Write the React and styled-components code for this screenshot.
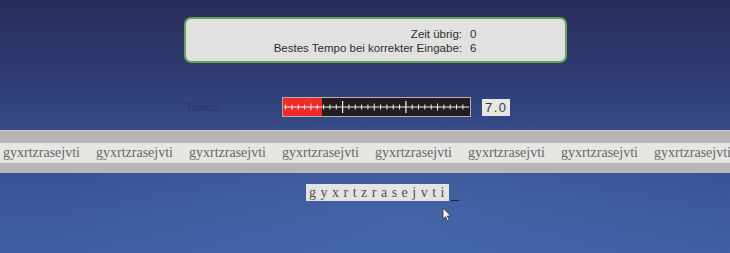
import React from 'react';
import styled, { createGlobalStyle } from 'styled-components';

const GlobalStyle = createGlobalStyle`
  html, body {
    margin: 0;
    padding: 0;
    overflow: hidden;
  }
  body {
    font-family: "Liberation Sans", Arial, sans-serif;
  }
`;

const WORD = 'gyxrtzrasejvti';
const TEMPO = 7.0;
const TEMPO_MAX = 30;

function App() {
  const repeats = Array.from({ length: 8 });
  return (
    <Screen>
      <GlobalStyle />
      <InfoBox>
        <InfoGrid>
          <InfoLabel>Zeit übrig:</InfoLabel>
          <InfoValue>0</InfoValue>
          <InfoLabel>Bestes Tempo bei korrekter Eingabe:</InfoLabel>
          <InfoValue>6</InfoValue>
        </InfoGrid>
      </InfoBox>

      <TempoRow>
        <TempoLabel>Tempo:</TempoLabel>
        <Meter>
          <MeterFill style={{ width: `${(TEMPO / TEMPO_MAX) * 100 * 0.9}%` }} />
          <Scale />
        </Meter>
        <ValueBox>{TEMPO.toFixed(1)}</ValueBox>
      </TempoRow>

      <Band>
        <Strip>
          {repeats.map((_, i) => (
            <Word key={i}>{WORD}</Word>
          ))}
        </Strip>
      </Band>

      <InputRow>
        <Typed>{WORD}</Typed>
        <Caret />
        <Pointer />
      </InputRow>
    </Screen>
  );
}

function Scale() {
  const ticks = [];
  const step = 63.3 / 10;
  for (let i = 0; i <= 30; i++) {
    const x = -3.7 + i * step;
    if (x < 1 || x > 186) continue;
    const major = i % 10 === 0;
    const mid = i % 5 === 0;
    const h = major ? 6 : mid ? 3.5 : 2.5;
    ticks.push(
      <line key={i} x1={x} x2={x} y1={9 - h} y2={9 + h} stroke="#f2f2f2" strokeWidth={major ? 1.2 : 1} />
    );
  }
  return (
    <ScaleSvg viewBox="0 0 187 18" width="187" height="18">
      <line x1="1" x2="186" y1="9" y2="9" stroke="#f2f2f2" strokeWidth="1" />
      {ticks}
    </ScaleSvg>
  );
}

function Pointer() {
  return (
    <PointerSvg width="10" height="15" viewBox="0 0 10 15">
      <path d="M1 1 L1 12 L3.5 9.6 L5.6 14 L7.3 13.2 L5.3 9 L8.6 9 Z" fill="#f4f4f4" stroke="#333" strokeWidth="0.8" />
    </PointerSvg>
  );
}

export default App;

const Screen = styled.div`
  position: relative;
  width: 730px;
  height: 253px;
  overflow: hidden;
  background:
    radial-gradient(ellipse 70% 60% at 55% 85%, rgba(80, 120, 190, 0.35), rgba(0, 0, 0, 0) 70%),
    linear-gradient(180deg, #282e5a 0%, #2f3b71 30%, #37508e 60%, #3f5fa4 100%);
  padding-top: 17px;
  box-sizing: border-box;
`;

const InfoBox = styled.div`
  margin-left: 184px;
  width: 383px;
  height: 46px;
  box-sizing: border-box;
  background: #e1e1df;
  border: 2px solid #67a35a;
  border-radius: 7px;
  display: flex;
  align-items: center;
  padding-top: 3px;
`;

const InfoGrid = styled.div`
  display: grid;
  grid-template-columns: 276px auto;
  column-gap: 8px;
  row-gap: 1px;
  font-size: 11.5px;
  line-height: 13px;
  color: #2e2e2e;
`;

const InfoLabel = styled.span`
  text-align: right;
`;

const InfoValue = styled.span``;

const TempoRow = styled.div`
  margin-top: 34px;
  height: 20px;
  display: flex;
  align-items: center;
  padding-left: 186px;
`;

const TempoLabel = styled.span`
  width: 96px;
  font-size: 11px;
  color: #2a3766;
`;

const Meter = styled.div`
  position: relative;
  width: 189px;
  height: 20px;
  box-sizing: border-box;
  border: 1.5px solid #b4b0b2;
  background: #241d20;
  overflow: hidden;
`;

const MeterFill = styled.div`
  position: absolute;
  left: 0;
  top: 0;
  bottom: 0;
  background: #ee2a2a;
`;

const ScaleSvg = styled.svg`
  position: absolute;
  left: 0;
  top: 0;
  display: block;
`;

const ValueBox = styled.div`
  margin-left: 11px;
  width: 28px;
  height: 17px;
  background: #e6e6e4;
  color: #3a3a3a;
  font-size: 13px;
  letter-spacing: 1.5px;
  display: flex;
  align-items: center;
  padding-left: 3px;
  box-sizing: border-box;
`;

const Band = styled.div`
  margin-top: 13px;
  height: 43px;
  background: #b9b4b6;
  border-top: 1px solid #cfcdd0;
  box-sizing: border-box;
  padding-top: 12px;
`;

const Strip = styled.div`
  height: 20px;
  background: #e6e6e3;
  display: flex;
  align-items: center;
  gap: 15px;
  padding-left: 3px;
  white-space: nowrap;
  overflow: hidden;
`;

const Word = styled.span`
  font-family: "Liberation Serif", "Times New Roman", serif;
  font-size: 14px;
  color: #6a6769;
  flex: none;
  width: 78px;
`;

const InputRow = styled.div`
  position: relative;
  margin-top: 10px;
  padding-left: 306px;
  display: flex;
  align-items: flex-end;
  height: 18px;
`;

const Typed = styled.div`
  height: 17px;
  width: 143px;
  box-sizing: border-box;
  padding-left: 3px;
  background: #e4e4e2;
  color: #4f4f4f;
  font-family: "Liberation Serif", "Times New Roman", serif;
  font-size: 14px;
  line-height: 17px;
  letter-spacing: 4.5px;
  white-space: nowrap;
  overflow: hidden;
`;

const Caret = styled.span`
  width: 8px;
  height: 0;
  margin-left: 2px;
  border-bottom: 1.5px solid #1e2440;
`;

const PointerSvg = styled.svg`
  position: absolute;
  left: 442px;
  top: 24px;
`;
